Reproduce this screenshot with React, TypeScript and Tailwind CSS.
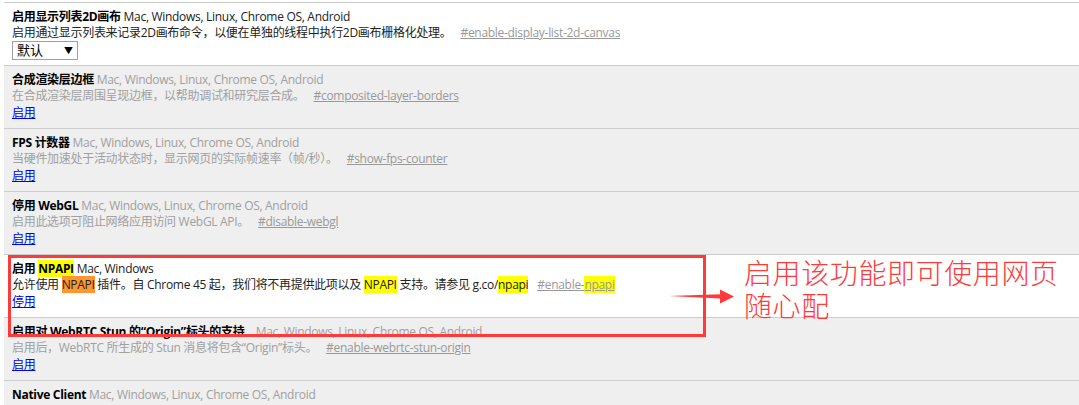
import { ReactNode } from "react"

const font = { fontFamily: '"Open Sans", "Noto Sans CJK SC", sans-serif' }

function Hl({ children, orange }: { children: ReactNode; orange?: boolean }) {
  return <span className={orange ? "bg-[#ff9632]" : "bg-[#ffff00]"}>{children}</span>
}

function Row({
  title,
  platforms,
  desc,
  tag,
  action,
  active,
}: {
  title: ReactNode
  platforms: string
  desc?: ReactNode
  tag?: ReactNode
  action?: ReactNode
  active?: boolean
}) {
  return (
    <div className={`h-[63px] border-b border-[#cccccc] pl-2 pt-[6px] ${active ? "bg-white" : "bg-[#efefef]"}`}>
      <div className="leading-[16px]">
        <span className="font-bold text-black">{title}</span>{" "}
        <span className={active ? "text-[#222]" : "text-[#a0a0a0]"}>{platforms}</span>
      </div>
      {desc && (
        <div className={`leading-[16px] ${active ? "text-[#222]" : "text-[#a0a0a0]"}`}>
          {desc}
          {tag && <span className="ml-[9px] text-[#999] underline">{tag}</span>}
        </div>
      )}
      {action}
    </div>
  )
}

function EnableLink({ label = "启用" }: { label?: string }) {
  return <a className="block mt-[1px] leading-[16px] text-[#0000ee] underline cursor-pointer">{label}</a>
}

export default function App() {
  return (
    <div className="relative w-[1079px] h-[405px] overflow-hidden bg-white text-[12px]" style={font}>
      <div className="ml-1 mt-[2px] border-t border-[#cccccc] tracking-[-0.3px]">
        <Row
          active
          title="启用显示列表2D画布"
          platforms="Mac, Windows, Linux, Chrome OS, Android"
          desc="启用通过显示列表来记录2D画布命令，以便在单独的线程中执行2D画布栅格化处理。"
          tag="#enable-display-list-2d-canvas"
          action={
            <div className="flex h-[19px] w-[66px] items-center justify-between border border-[#a0a0a0] bg-white px-[4px] text-[13px] text-black tracking-normal">
              <span>默认</span>
              <span className="text-[9px]">▼</span>
            </div>
          }
        />
        <Row
          title="合成渲染层边框"
          platforms="Mac, Windows, Linux, Chrome OS, Android"
          desc="在合成渲染层周围呈现边框，以帮助调试和研究层合成。"
          tag="#composited-layer-borders"
          action={<EnableLink />}
        />
        <Row
          title="FPS 计数器"
          platforms="Mac, Windows, Linux, Chrome OS, Android"
          desc="当硬件加速处于活动状态时，显示网页的实际帧速率（帧/秒）。"
          tag="#show-fps-counter"
          action={<EnableLink />}
        />
        <Row
          title="停用 WebGL"
          platforms="Mac, Windows, Linux, Chrome OS, Android"
          desc="启用此选项可阻止网络应用访问 WebGL API。"
          tag="#disable-webgl"
          action={<EnableLink />}
        />
        <Row
          active
          title={
            <>
              启用 <Hl>NPAPI</Hl>
            </>
          }
          platforms="Mac, Windows"
          desc={
            <>
              允许使用 <Hl orange>NPAPI</Hl> 插件。自 Chrome 45 起，我们将不再提供此项以及 <Hl>NPAPI</Hl> 支持。请参见 g.co/<Hl>npapi</Hl>
            </>
          }
          tag={
            <>
              #enable-<Hl>npapi</Hl>
            </>
          }
          action={<EnableLink label="停用" />}
        />
        <Row
          title={<>启用对 WebRTC Stun 的“Origin”标头的支持&nbsp;&nbsp;&nbsp;</>}
          platforms="Mac, Windows, Linux, Chrome OS, Android"
          desc="启用后，WebRTC 所生成的 Stun 消息将包含“Origin”标头。"
          tag="#enable-webrtc-stun-origin"
          action={<EnableLink />}
        />
        <Row title="Native Client" platforms="Mac, Windows, Linux, Chrome OS, Android" />
      </div>

      {/* annotation overlay */}
      <div className="absolute left-[8px] top-[255px] h-[82px] w-[698px] border-[3px] border-[#ff3a3a]" />
      <svg className="absolute left-[660px] top-[280px]" width="84" height="32" viewBox="0 0 84 32">
        <path d="M9 16 L60 14.2 L60 9.5 L74 16.5 L60 23.5 L60 18.6 Z" fill="#ff3a3a" />
      </svg>
      <div
        className="absolute left-[744px] top-[256px] text-[28px] leading-[33px] tracking-[0.6px] text-[#ff3a3a] font-light"
        style={{ fontFamily: '"Noto Sans CJK SC", sans-serif' }}
      >
        启用该功能即可使用网页
        <br />
        随心配
      </div>
    </div>
  )
}
